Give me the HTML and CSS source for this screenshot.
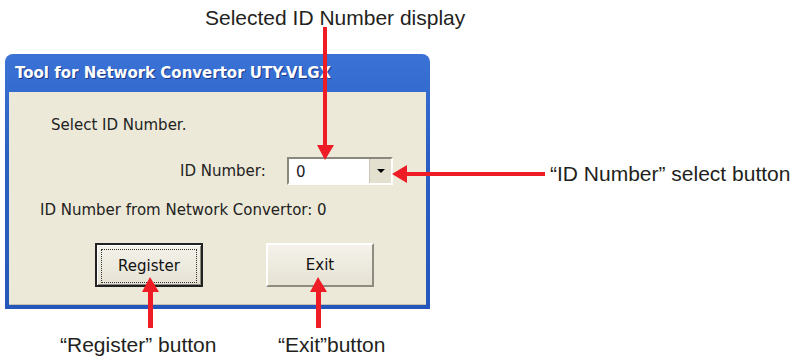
FILE: index.html
```html
<!DOCTYPE html>
<html lang="en">
<head>
    <meta charset="UTF-8">
    <title>Tool for Network Convertor UTY-VLGX</title>
    <link rel="stylesheet" href="styles.css">
</head>
<body>
    <div class="figure">
        <div class="window">
            <div class="titlebar">Tool for Network Convertor UTY-VLGX</div>
            <div class="client">
                <p class="prompt">Select ID Number.</p>
                <div class="id-row">
                    <label for="id-number">ID Number:</label>
                    <div class="combo" id="id-number">
                        <span class="combo-value">0</span>
                        <span class="combo-button"><span class="caret"></span></span>
                    </div>
                </div>
                <p class="from-convertor">ID Number from Network Convertor: 0</p>
                <div class="buttons">
                    <button class="btn btn-default"><span class="focus">Register</span></button>
                    <button class="btn">Exit</button>
                </div>
            </div>
        </div>

        <!-- callouts -->
        <svg class="arrows" width="794" height="359" viewBox="0 0 794 359">
            <g fill="#ee1c25">
                <rect x="323" y="27" width="4" height="120"/>
                <polygon points="317,145 334,145 325,160"/>
                <rect x="405" y="172" width="140" height="4"/>
                <polygon points="407,165 407,183 392,174"/>
                <rect x="148" y="290" width="5" height="38"/>
                <polygon points="142,292 159,292 150,277"/>
                <rect x="316" y="290" width="5" height="38"/>
                <polygon points="310,292 327,292 318,277"/>
            </g>
        </svg>
        <span class="note note-display">Selected ID Number display</span>
        <span class="note note-select">“ID Number” select button</span>
        <span class="note note-register">“Register” button</span>
        <span class="note note-exit">“Exit”button</span>
    </div>
</body>
</html>
```

FILE: styles.css
```css
body {
    margin: 0;
    background: #fff;
    font-family: "DejaVu Sans", sans-serif;
}
.figure {
    position: relative;
    width: 794px;
    height: 359px;
    padding: 54px 0 0 5px;
    box-sizing: border-box;
}
.window {
    width: 425px;
    height: 255px;
    box-sizing: border-box;
    padding: 0 4px 4px 4px;
    border-radius: 8px 8px 0 0;
    background: linear-gradient(#3a72d6, #2b5fc4 40%, #2556bc);
    display: flex;
    flex-direction: column;
}
.titlebar {
    height: 38px;
    line-height: 38px;
    padding-left: 6px;
    color: #fff;
    font-weight: bold;
    font-size: 15px;
    text-shadow: 1px 1px 0 #1a3a88;
}
.client {
    flex: 1;
    background: #ece9d8;
    border-bottom: 1px solid #c5c2b2;
    font-size: 15px;
    color: #222;
}
.prompt {
    margin: 24px 0 0 42px;
    line-height: 18px;
}
.id-row {
    display: flex;
    align-items: center;
    margin: 23px 0 0 171px;
}
.id-row label {
    width: 107px;
}
.combo {
    width: 106px;
    height: 28px;
    box-sizing: border-box;
    border: 2px solid;
    border-color: #8a887c #fff #fff #8a887c;
    background: #fff;
    display: flex;
    align-items: stretch;
}
.combo-value {
    flex: 1;
    padding: 4px 0 0 7px;
}
.combo-button {
    width: 21px;
    background: #e3e0d0;
    border-left: 1px solid #c9c6b7;
    display: flex;
    align-items: center;
    justify-content: center;
}
.caret {
    width: 0;
    height: 0;
    border-left: 4px solid transparent;
    border-right: 4px solid transparent;
    border-top: 4px solid #000;
}
.from-convertor {
    margin: 16px 0 0 31px;
    line-height: 18px;
}
.buttons {
    display: flex;
    gap: 63px;
    margin: 24px 0 0 86px;
}
.btn {
    width: 108px;
    height: 44px;
    box-sizing: border-box;
    font-family: "DejaVu Sans", sans-serif;
    font-size: 15px;
    color: #111;
    background: linear-gradient(#f4f2ea, #e6e3d4);
    border: 2px solid;
    border-color: #fff #8e8c80 #8e8c80 #fff;
    padding: 0;
}
.btn-default {
    border: 2px solid #222;
    box-shadow: inset 1px 1px 0 #fff, inset -1px -1px 0 #8e8c80;
    padding: 4px;
}
.focus {
    display: flex;
    align-items: center;
    justify-content: center;
    height: 100%;
    border: 1px dotted #333;
}
.arrows {
    position: absolute;
    left: 0;
    top: 0;
}
.note {
    position: absolute;
    font-family: "Liberation Sans", Arial, sans-serif;
    font-size: 21px;
    color: #231f20;
    line-height: 22px;
    white-space: nowrap;
}
.note-display { left: 205px; top: 7px; }
.note-select { left: 550px; top: 163px; }
.note-register { left: 60px; top: 334px; }
.note-exit { left: 278px; top: 334px; }
```
